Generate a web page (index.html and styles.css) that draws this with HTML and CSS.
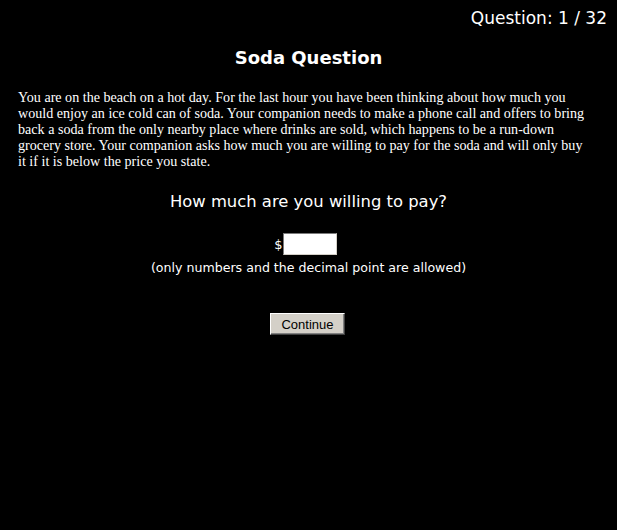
FILE: index.html
```html
<!DOCTYPE html>
<html>
<head>
<meta charset="utf-8">
<link rel="stylesheet" href="styles.css">
</head>
<body>
<div class="page">
  <div class="counter">Question: 1 / 32</div>
  <h1 class="title">Soda Question</h1>
  <p class="story">You are on the beach on a hot day. For the last hour you have been thinking about how much you would enjoy an ice cold can of soda. Your companion needs to make a phone call and offers to bring back a soda from the only nearby place where drinks are sold, which happens to be a run-down grocery store. Your companion asks how much you are willing to pay for the soda and will only buy it if it is below the price you state.</p>
  <div class="ask">How much are you willing to pay?</div>
  <div class="answer"><span class="dollar">$</span><input class="price" type="text"></div>
  <div class="note">(only numbers and the decimal point are allowed)</div>
  <div class="actions"><button class="continue" type="button">Continue</button></div>
</div>
</body>
</html>
```
FILE: styles.css
```css
html, body {
  margin: 0;
  padding: 0;
  background: #000;
  color: #fff;
}
.page {
  width: 617px;
  height: 530px;
  font-family: "DejaVu Sans", Verdana, sans-serif;
}
.counter {
  text-align: right;
  font-size: 17px;
  padding: 8px 10px 0 0;
  line-height: 20px;
}
.title {
  margin: 19px 0 0 0;
  text-align: center;
  font-size: 18px;
  line-height: 22px;
  font-weight: bold;
}
.story {
  margin: 20px 27px 0 18px;
  font-family: "Liberation Serif", "Times New Roman", serif;
  font-size: 14.1px;
  line-height: 16px;
}
.ask {
  text-align: center;
  font-size: 16.4px;
  line-height: 22px;
  margin-top: 22px;
}
.answer {
  display: flex;
  justify-content: center;
  align-items: center;
  margin-top: 20px;
  font-size: 13px;
  padding-right: 6px;
}
.dollar {
  margin-right: 0;
}
.price {
  box-sizing: border-box;
  width: 54px;
  height: 22px;
  padding: 0 1px;
  border: 1px solid #7a7a7a;
  border-right-color: #d4d0c8;
  border-bottom-color: #d4d0c8;
  background: #fff;
  margin: 0;
}
.note {
  text-align: center;
  font-size: 12.6px;
  line-height: 16px;
  margin-top: 5px;
}
.actions {
  display: flex;
  justify-content: center;
  margin-top: 37px;
  padding-right: 2px;
}
.continue {
  box-sizing: border-box;
  width: 75px;
  height: 22px;
  margin: 0;
  padding: 0;
  background: #d4d0c8;
  color: #000;
  font-family: "Liberation Sans", Arial, sans-serif;
  font-size: 13px;
  border: 1px solid;
  border-color: #fff #404040 #404040 #fff;
  box-shadow: inset -1px -1px 0 #808080;
}
```
